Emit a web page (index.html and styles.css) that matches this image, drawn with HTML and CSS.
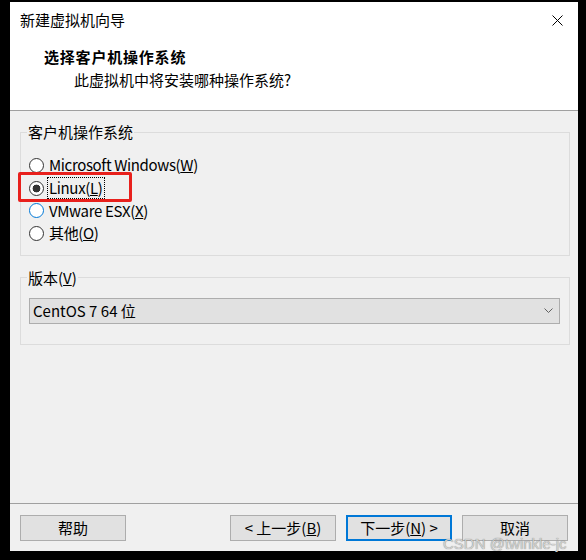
FILE: index.html
```html
<!DOCTYPE html>
<html lang="zh-CN">
<head>
<meta charset="utf-8">
<title>新建虚拟机向导</title>
<link rel="stylesheet" href="styles.css">
</head>
<body>
<div class="window">
  <div class="header">
    <div class="titlebar">
      <span class="title">新建虚拟机向导</span>
      <svg class="close" width="11" height="11" viewBox="0 0 11 11"><path d="M0.5 0.5 L10.5 10.5 M10.5 0.5 L0.5 10.5" stroke="#000" stroke-width="1" fill="none"/></svg>
    </div>
    <div class="heading">选择客户机操作系统</div>
    <div class="subheading">此虚拟机中将安装哪种操作系统?</div>
  </div>
  <div class="body">
    <fieldset class="group os-group">
      <legend>客户机操作系统</legend>
      <div class="radio"><span class="dot"></span><span class="rlabel">Microsoft Windows(<u>W</u>)</span></div>
      <div class="radio"><span class="dot checked"></span><span class="rlabel focus">Linux(<u>L</u>)</span></div>
      <div class="radio"><span class="dot hover"></span><span class="rlabel">VMware ESX(<u>X</u>)</span></div>
      <div class="radio"><span class="dot"></span><span class="rlabel">其他(<u>O</u>)</span></div>
    </fieldset>
    <fieldset class="group version-group">
      <legend>版本(<u>V</u>)</legend>
      <div class="combo">
        <span class="combo-text">CentOS 7 64 位</span>
        <svg class="chev" width="9" height="5" viewBox="0 0 9 5"><path d="M0.5 0.5 L4.5 4.5 L8.5 0.5" stroke="#606060" stroke-width="1" fill="none"/></svg>
      </div>
    </fieldset>
  </div>
  <div class="footer">
    <button class="btn">帮助</button>
    <div class="nav">
      <button class="btn">&lt; 上一步(<u>B</u>)</button>
      <button class="btn default">下一步(<u>N</u>) &gt;</button>
      <button class="btn">取消</button>
    </div>
  </div>
  <div class="annot"></div>
</div>
<div class="watermark">CSDN @twinkle-jc</div>
</body>
</html>
```
FILE: styles.css
```css
* { box-sizing: border-box; }
html, body { margin: 0; padding: 0; }
body {
  background: #000;
  width: 586px;
  height: 560px;
  overflow: hidden;
  position: relative;
  font-family: "Noto Sans CJK SC", "Liberation Sans", sans-serif;
  font-size: 15px;
  color: #000;
}
.window {
  margin: 2px 0 0 10px;
  width: 568px;
  height: 549px;
  display: flex;
  flex-direction: column;
  background: #f0f0f0;
  position: relative;
}
.header {
  background: #fff;
  height: 109px;
  border-bottom: 1px solid #a0a0a0;
}
.titlebar {
  height: 36px;
  display: flex;
  align-items: center;
  justify-content: space-between;
  padding: 0 15px 0 10px;
}
.title { line-height: 20px; }
.heading {
  margin-top: 9px;
  padding-left: 34px;
  line-height: 20px;
  font-weight: bold;
  letter-spacing: 0.8px;
}
.subheading {
  margin-top: 3px;
  padding-left: 64px;
  line-height: 20px;
}
.body {
  flex: 1;
  padding: 11px 8px 0 10px;
}
.group {
  margin: 0;
  min-width: 0;
  border: 1px solid #dcdcdc;
  padding: 12px 9px 10px 8px;
}
.group legend {
  padding: 0 1px;
  margin-left: -2px;
  line-height: 20px;
}
.version-group {
  margin-top: 12px;
  padding: 10px 9px 20px 8px;
}
.radio {
  display: flex;
  align-items: center;
  height: 22.7px;
}
.dot {
  width: 15px;
  height: 15px;
  border-radius: 50%;
  border: 1px solid #333;
  background: #fff;
  margin-right: 5px;
  flex: none;
}
.dot.checked {
  background: radial-gradient(circle, #333 0 3.6px, #fff 4.2px);
}
.dot.hover { border-color: #0078d7; }
.rlabel {
  line-height: 20px;
  letter-spacing: -0.35px;
}
.rlabel.focus {
  outline: 1px dotted #000;
  outline-offset: 0;
  padding: 0 1px;
  margin-left: -1px;
}
.combo {
  height: 26px;
  border: 1px solid #adadad;
  background: #e1e1e1;
  display: flex;
  align-items: center;
  justify-content: space-between;
  padding: 0 6px 0 3px;
}
.footer {
  border-top: 1px solid #a0a0a0;
  padding: 11px 10px 10px 10px;
  display: flex;
  justify-content: space-between;
}
.nav { display: flex; gap: 10px; }
.btn {
  width: 106px;
  height: 26px;
  border: 1px solid #adadad;
  background: #e1e1e1;
  font-family: inherit;
  font-size: 15px;
  color: #000;
  padding: 0;
  line-height: 20px;
}
.btn.default { border: 2px solid #0078d7; }
.annot {
  position: absolute;
  left: 8px;
  top: 170px;
  width: 114px;
  height: 30px;
  border: 3px solid #e8201c;
  border-radius: 2px;
}
.watermark {
  position: absolute;
  left: 443px;
  top: 535px;
  font-family: "Liberation Sans", sans-serif;
  font-size: 15px;
  line-height: 18px;
  color: rgba(215, 215, 215, 0.95);
  text-shadow: 0 0 1px rgba(0, 0, 0, 0.55);
}
```
